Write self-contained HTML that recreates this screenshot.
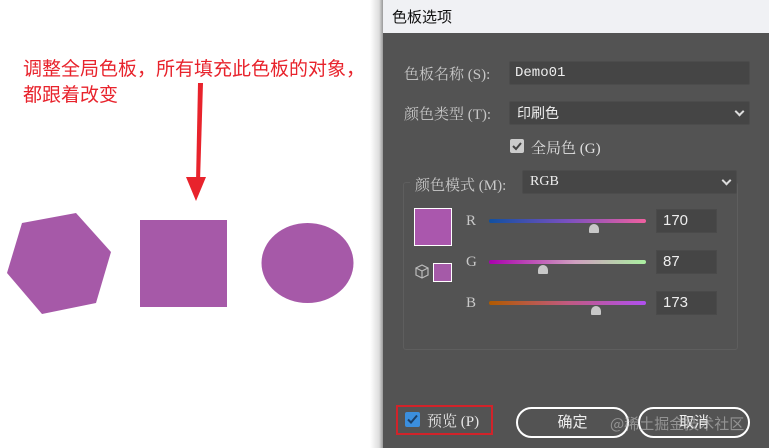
<!DOCTYPE html>
<html><head><meta charset="utf-8"><style>
*{margin:0;padding:0;box-sizing:border-box}
body{width:769px;height:448px;overflow:hidden;background:#fff;position:relative;font-family:"Liberation Sans","Noto Sans CJK SC",sans-serif}
.a{position:absolute}
.lbl{color:#c8c8c8;font-size:15px;font-family:"Liberation Serif","Noto Serif CJK SC",serif}
.inp{background:#454545;border:1px solid #4c4c4c;border-radius:2px}
.w{color:#eee;font-size:15px}
.chev{position:absolute;right:6px;top:6px;width:7px;height:7px;border-right:2px solid #ddd;border-bottom:2px solid #ddd;transform:rotate(45deg)}
.sl{position:absolute;left:489px;width:157px;height:4px;border-radius:2px}
.th{position:absolute;width:10px;height:9px;background:#c8c8c8;border-radius:5px 5px 1px 1px}
.num{position:absolute;left:656px;width:61px;height:24px;background:#454545;border:1px solid #4a4a4a;color:#eee;font-size:15px;padding:2px 6px}
.btn{position:absolute;top:407px;height:31px;border:2px solid #fff;border-radius:16px;color:#eee;font-size:15px;text-align:center;line-height:27px}
</style></head><body>
<div class="a" style="left:23px;top:55px;color:#e8232c;font-size:19px;line-height:26px;width:350px;font-family:'Noto Sans CJK SC',sans-serif">调整全局色板，所有填充此色板的对象，<br>都跟着改变</div>
<svg class="a" style="left:0;top:0" width="383" height="330">
<polygon points="198,83 203,83 200,182 196,182" fill="#e8232c"/>
<polygon points="186,177 206,177 196,201" fill="#e8232c"/>
<polygon points="22,223 76,213 111,252 96,303 42,314 7,273" fill="#a659a8"/>
<rect x="140" y="220" width="87" height="87" fill="#a659a8"/>
<ellipse cx="307.5" cy="263" rx="46" ry="40" fill="#a659a8"/>
</svg>
<div class="a" style="left:370px;top:0;width:13px;height:448px;background:linear-gradient(90deg,#fff,#ddd 70%,#999)"></div>
<div class="a" style="left:383px;top:0;width:386px;height:33px;background:#f0f1f4;font-size:15px;color:#111;padding:6px 0 0 9px;font-family:'Noto Sans CJK SC',sans-serif">色板选项</div>
<div class="a" style="left:383px;top:33px;width:386px;height:415px;background:#535353"></div>
<div class="a lbl" style="left:404px;top:63px">色板名称 (S):</div>
<div class="a inp w" style="left:509px;top:61px;width:241px;height:24px;padding:3px 5px;font-family:'Liberation Mono',monospace;font-size:14px">Demo01</div>
<div class="a lbl" style="left:404px;top:103px">颜色类型 (T):</div>
<div class="a inp w" style="left:509px;top:101px;width:241px;height:24px;padding:1px 7px;font-family:'Noto Sans CJK SC',sans-serif;font-size:14px">印刷色<span class="chev"></span></div>
<div class="a" style="left:510px;top:139px;width:14px;height:14px;background:#ccc;border-radius:2px"><svg width="14" height="14"><path d="M3 7l3 3 5-6" stroke="#444" stroke-width="2" fill="none"/></svg></div>
<div class="a lbl" style="left:531px;top:137px;color:#e0e0e0">全局色 (G)</div>
<div class="a" style="left:403px;top:182px;width:335px;height:168px;border:1px solid #5e5e5e;border-radius:3px"></div>
<div class="a" style="left:410px;top:176px;width:112px;height:16px;background:#535353"></div>
<div class="a lbl" style="left:415px;top:174px">颜色模式 (M):</div>
<div class="a inp w" style="left:522px;top:170px;width:215px;height:24px;padding:3px 7px;font-family:'Liberation Serif',serif;font-size:14px;background:#464646">RGB<span class="chev"></span></div>
<div class="a" style="left:414px;top:208px;width:38px;height:38px;background:#aa57ad;border:1px solid #fff"></div>
<svg class="a" style="left:415px;top:264px" width="14" height="16"><path d="M7 1l6 3v7l-6 3-6-3V4zM1 4l6 3 6-3M7 7v7" stroke="#bbb" stroke-width="1.2" fill="none"/></svg>
<div class="a" style="left:433px;top:263px;width:19px;height:19px;background:#a55aa8;border:1px solid #fff"></div>
<div class="a lbl" style="left:466px;top:213px">R</div>
<div class="a lbl" style="left:466px;top:254px">G</div>
<div class="a lbl" style="left:466px;top:295px">B</div>
<div class="sl" style="top:219px;background:linear-gradient(90deg,#1050a0,#7a50c0 50%,#f060a0)"></div>
<div class="sl" style="top:260px;background:linear-gradient(90deg,#aa00ad,#d0a0c0 55%,#aaf0a0)"></div>
<div class="sl" style="top:301px;background:linear-gradient(90deg,#b05a00,#c05a80 50%,#b050f0)"></div>
<div class="th" style="left:589px;top:224px"></div>
<div class="th" style="left:538px;top:265px"></div>
<div class="th" style="left:591px;top:306px"></div>
<div class="num" style="top:209px">170</div>
<div class="num" style="top:250px">87</div>
<div class="num" style="top:291px">173</div>
<div class="a" style="left:396px;top:405px;width:97px;height:30px;border:2px solid #d2232a"></div>
<div class="a" style="left:405px;top:412px;width:15px;height:15px;background:#3b8fde;border-radius:2px"><svg width="15" height="15"><path d="M3 7.5l3 3 6-7" stroke="#1b3f66" stroke-width="2" fill="none"/></svg></div>
<div class="a lbl" style="left:427px;top:410px;color:#e8e8e8">预览 (P)</div>
<div class="btn" style="left:516px;width:113px">确定</div>
<div class="btn" style="left:638px;width:112px">取消</div>
<div class="a" style="left:610px;top:413px;color:rgba(200,200,200,.55);font-size:15px;font-family:'Noto Sans CJK SC',sans-serif">@稀土掘金技术社区</div>
</body></html>
